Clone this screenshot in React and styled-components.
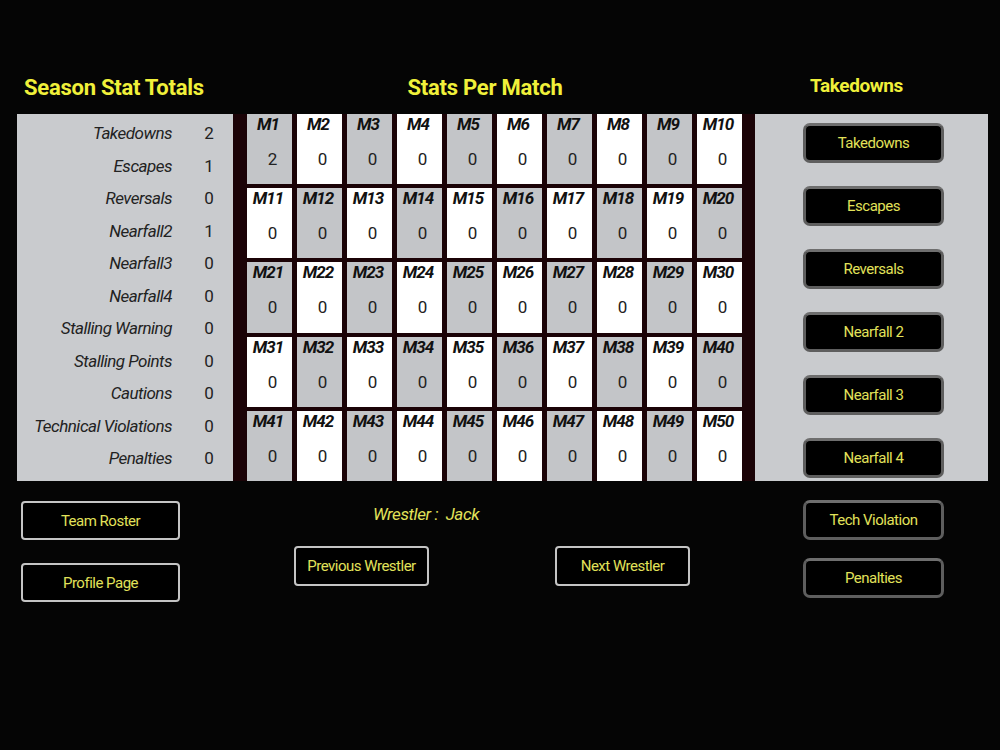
import React from 'react';
import styled, { createGlobalStyle } from 'styled-components';

const GlobalStyle = createGlobalStyle`
  body {
    margin: 0;
    background: #050505;
    font-family: Roboto, 'Liberation Sans', sans-serif;
  }
`;

const Screen = styled.div`
  width: 1000px;
  height: 750px;
  background: #050505;
  padding-left: 17px;
  box-sizing: border-box;
`;

const Columns = styled.div`
  display: grid;
  grid-template-columns: 216px 522px 233px;
`;

const HeaderRow = styled(Columns)`
  height: 114px;
  align-items: end;
  padding-bottom: 13px;
  box-sizing: border-box;
`;

const Heading = styled.h1`
  margin: 0;
  font-size: ${(p) => (p.$small ? '19px' : '22px')};
  line-height: 26px;
  font-weight: 700;
  letter-spacing: ${(p) => (p.$small ? '-0.4px' : '-0.25px')};
  color: #f0f03a;
  text-align: ${(p) => p.$align || 'left'};
  padding-left: ${(p) => p.$indent || 0}px;
  padding-right: ${(p) => p.$shift || 0}px;
  padding-bottom: ${(p) => (p.$small ? 2 : 0)}px;
`;

const Body = styled(Columns)`
  height: 367px;
`;

const TotalsPanel = styled.div`
  background: #c9cbce;
  padding-top: 3px;
  display: grid;
  grid-template-columns: 155px 40px;
  grid-auto-rows: 32.5px;
  column-gap: 17px;
  align-items: center;
`;

const TotalLabel = styled.span`
  text-align: right;
  font-style: italic;
  font-size: 17px;
  letter-spacing: -0.5px;
  color: #222;
`;

const TotalValue = styled.span`
  text-align: center;
  font-size: 17px;
  color: #222;
`;

const MatchGrid = styled.div`
  background: #1b0307;
  padding: 0 13px 0 14px;
  display: grid;
  grid-template-columns: repeat(10, 45px);
  grid-template-rows: repeat(5, 1fr);
  column-gap: 5px;
  row-gap: 4px;
`;

const MatchCell = styled.div`
  background: ${(p) => (p.$light ? '#ffffff' : '#c3c5c8')};
  display: flex;
  flex-direction: column;
`;

const MatchLabel = styled.span`
  height: 20px;
  line-height: 20px;
  text-align: center;
  padding-right: 3px;
  font-size: 17px;
  font-weight: 700;
  font-style: italic;
  letter-spacing: -0.9px;
  color: #111;
`;

const MatchValue = styled.span`
  margin-top: 15px;
  line-height: 20px;
  text-align: center;
  padding-left: 6px;
  font-size: 17px;
  color: #222;
`;

const ActionPanel = styled.div`
  background: #c9cbce;
  display: flex;
  flex-direction: column;
  padding: 9px 0 0 48px;
  gap: 23px;
`;

const StatButton = styled.button`
  width: 141px;
  height: 40px;
  box-sizing: border-box;
  background: #000;
  border: 3px solid #5e5e5e;
  border-top-color: #6e6e6e;
  border-radius: 7px;
  color: #e2e25a;
  font-family: Roboto, 'Liberation Sans', sans-serif;
  font-size: 15px;
  letter-spacing: -0.5px;
  padding: 0;
`;

const NavButton = styled.button`
  width: ${(p) => p.$width || 159}px;
  height: ${(p) => p.$height || 39}px;
  box-sizing: border-box;
  background: #000;
  border: 2px solid #c4c4c4;
  border-radius: 4px;
  color: #e2e25a;
  font-family: Roboto, 'Liberation Sans', sans-serif;
  font-size: 15px;
  letter-spacing: -0.5px;
  padding: 0;
`;

const Footer = styled(Columns)`
  padding-top: 20px;
`;

const FooterStack = styled.div`
  display: flex;
  flex-direction: column;
  gap: ${(p) => p.$gap}px;
  padding-left: ${(p) => p.$indent}px;
  margin-top: ${(p) => p.$offset || 0}px;
`;

const WrestlerInfo = styled.div`
  display: flex;
  flex-direction: column;
`;

const WrestlerName = styled.div`
  padding-left: 140px;
  margin-top: 2px;
  line-height: 22px;
  font-size: 17px;
  font-style: italic;
  letter-spacing: -0.4px;
  color: #e2e25a;
  white-space: pre;
`;

const WrestlerNav = styled.div`
  display: flex;
  justify-content: space-between;
  padding: 0 65px 0 61px;
  margin-top: 21px;
`;

const totals = [
  ['Takedowns', 2],
  ['Escapes', 1],
  ['Reversals', 0],
  ['Nearfall2', 1],
  ['Nearfall3', 0],
  ['Nearfall4', 0],
  ['Stalling Warning', 0],
  ['Stalling Points', 0],
  ['Cautions', 0],
  ['Technical Violations', 0],
  ['Penalties', 0],
];

const statButtons = ['Takedowns', 'Escapes', 'Reversals', 'Nearfall 2', 'Nearfall 3', 'Nearfall 4'];

const matches = Array.from({ length: 50 }, (_, i) => ({
  name: `M${i + 1}`,
  value: i === 0 ? 2 : 0,
  light: (Math.floor(i / 10) + (i % 10)) % 2 === 1,
}));

const App = () => {
  return (
    <>
      <GlobalStyle />
      <Screen>
        <HeaderRow>
          <Heading $indent={7}>Season Stat Totals</Heading>
          <Heading $align="center" $shift={18}>Stats Per Match</Heading>
          <Heading $small $indent={55}>Takedowns</Heading>
        </HeaderRow>

        <Body>
          <TotalsPanel>
            {totals.map(([label, value]) => (
              <React.Fragment key={label}>
                <TotalLabel>{label}</TotalLabel>
                <TotalValue>{value}</TotalValue>
              </React.Fragment>
            ))}
          </TotalsPanel>

          <MatchGrid>
            {matches.map((m) => (
              <MatchCell key={m.name} $light={m.light}>
                <MatchLabel>{m.name}</MatchLabel>
                <MatchValue>{m.value}</MatchValue>
              </MatchCell>
            ))}
          </MatchGrid>

          <ActionPanel>
            {statButtons.map((b) => (
              <StatButton key={b}>{b}</StatButton>
            ))}
          </ActionPanel>
        </Body>

        <Footer>
          <FooterStack $gap={23} $indent={4}>
            <NavButton>Team Roster</NavButton>
            <NavButton>Profile Page</NavButton>
          </FooterStack>

          <WrestlerInfo>
            <WrestlerName>{'Wrestler :  Jack'}</WrestlerName>
            <WrestlerNav>
              <NavButton $width={135} $height={40}>Previous Wrestler</NavButton>
              <NavButton $width={135} $height={40}>Next Wrestler</NavButton>
            </WrestlerNav>
          </WrestlerInfo>

          <FooterStack $gap={18} $indent={48} $offset={-1}>
            <StatButton>Tech Violation</StatButton>
            <StatButton>Penalties</StatButton>
          </FooterStack>
        </Footer>
      </Screen>
    </>
  );
};

export default App;
